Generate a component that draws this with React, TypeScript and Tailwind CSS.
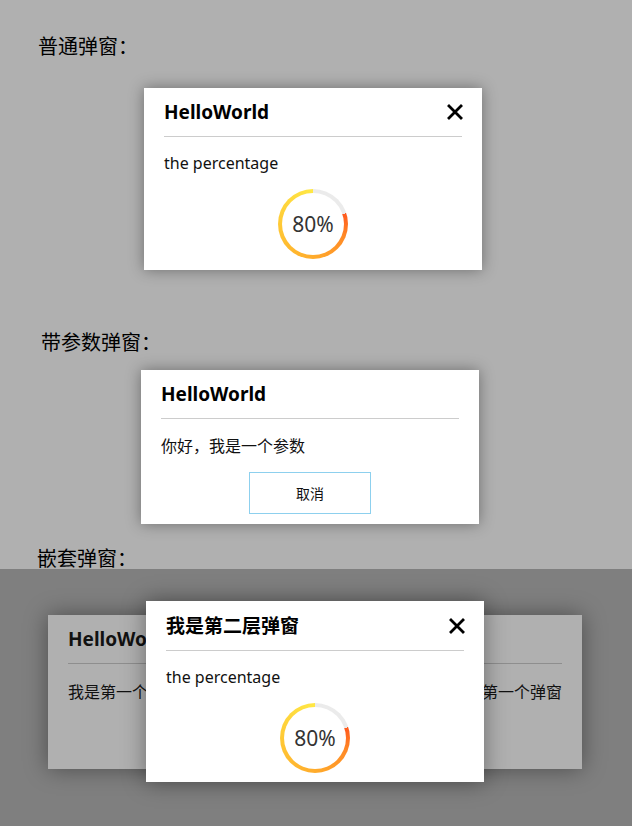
import React from 'react';

const FONT = "font-['Noto_Sans','Noto_Sans_CJK_SC',sans-serif]";

const CloseIcon: React.FC = () => (
  <svg className="w-[16px] h-[16px] -mr-[1px]" viewBox="0 0 16 16" fill="none" stroke="#000" strokeWidth="2.8" strokeLinecap="square">
    <path d="M2 2L14 14M14 2L2 14" />
  </svg>
);

const ProgressRing: React.FC<{ value: number }> = ({ value }) => {
  const gap = ((100 - value) / 100) * 360;
  return (
    <div
      className="w-[70px] h-[70px] rounded-full flex items-center justify-center"
      style={{
        background: `conic-gradient(#ebebeb 0deg ${gap}deg, #ff5a1e ${gap}deg, #ff8a26 ${gap + 40}deg, #ffac2c 180deg, #ffc634 260deg, #ffe845 360deg)`,
      }}
    >
      <div className="w-[62px] h-[62px] rounded-full bg-white flex items-center justify-center">
        <span className="text-[21px] leading-none text-[#333] font-['Noto_Sans',sans-serif]">{value}%</span>
      </div>
    </div>
  );
};

interface DialogProps {
  title: string;
  closable?: boolean;
  children: React.ReactNode;
  className?: string;
}

const Dialog: React.FC<DialogProps> = ({ title, closable, children, className }) => (
  <div className={`w-[338px] bg-white px-[20px] pt-[10px] pb-[11px] shadow-[0_0_14px_rgba(0,0,0,0.38)] ${className ?? ''}`}>
    <div className="flex items-center justify-between h-[28px]">
      <h3 className="text-[19px] font-bold leading-[28px] text-black">{title}</h3>
      {closable && <CloseIcon />}
    </div>
    <div className="mt-[10px] h-px bg-[#cccccc]" />
    {children}
  </div>
);

const PercentBody: React.FC = () => (
  <>
    <p className="mt-[14px] text-[16px] leading-[24px] text-[#111]">the percentage</p>
    <div className="mt-[14px] flex justify-center">
      <ProgressRing value={80} />
    </div>
  </>
);

export default function App() {
  return (
    <div className={`w-[632px] h-[826px] bg-[#b0b0b0] overflow-hidden flex flex-col ${FONT}`}>
      <h2 className="mt-[33px] ml-[38px] text-[20px] leading-[28px] text-black">普通弹窗：</h2>
      <Dialog title="HelloWorld" closable className="mt-[27px] ml-[144px]">
        <PercentBody />
      </Dialog>

      <h2 className="mt-[59px] ml-[41px] text-[20px] leading-[28px] text-black">带参数弹窗：</h2>
      <Dialog title="HelloWorld" className="mt-[13px] ml-[141px] !pt-[10px] !pb-[10px]">
        <p className="mt-[15px] text-[16px] leading-[24px] text-[#111]">你好，我是一个参数</p>
        <div className="mt-[14px] flex justify-center">
          <button className="w-[122px] h-[42px] border border-[#8dd0ee] bg-white text-[14px] text-[#111]">取消</button>
        </div>
      </Dialog>

      <h2 className="mt-[21px] ml-[37px] h-[24px] text-[20px] leading-[28px] text-black">嵌套弹窗：</h2>
      <div className="relative flex-1 bg-[#7f7f7f] pt-[46px]">
        <div className="ml-[48px] w-[534px] h-[154px] bg-[#b0b0b0] px-[20px] pt-[10px] shadow-[0_0_22px_rgba(0,0,0,0.4)]">
          <h3 className="h-[28px] text-[19px] font-bold leading-[28px] text-[#111]">HelloWorld</h3>
          <div className="mt-[10px] h-px bg-[#8e8e8e]" />
          <div className="mt-[16px] flex justify-between text-[16px] leading-[24px] text-[#111]">
            <span>我是第一个弹窗</span>
            <span>我是第一个弹窗</span>
          </div>
        </div>
        <Dialog title="我是第二层弹窗" closable className="absolute top-[32px] left-[146px] !pt-[11px] !pb-[9px] shadow-[0_0_22px_rgba(0,0,0,0.4)]">
          <PercentBody />
        </Dialog>
      </div>
    </div>
  );
}
